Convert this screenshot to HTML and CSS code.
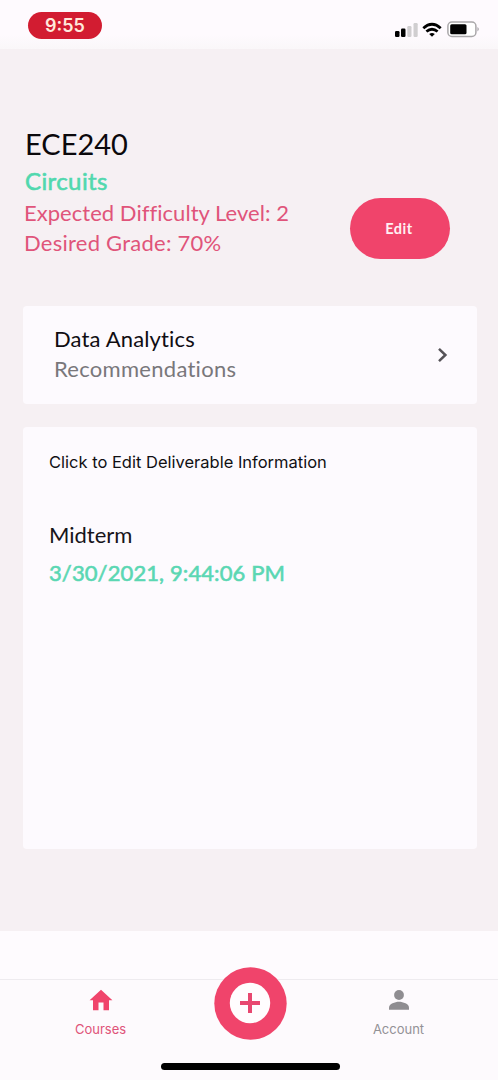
FILE: index.html
```html
<!DOCTYPE html>
<html lang="en">
<head>
<meta charset="utf-8">
<title>ECE240</title>
<link rel="stylesheet" href="styles.css">
</head>
<body>
<div class="phone">
  <header class="status">
    <span class="clock">9:55</span>
    <span class="indicators">
      <svg class="signal" width="24" height="16" viewBox="0 0 24 16"><rect x="0" y="9" width="4.5" height="6" rx="1.2"/><rect x="6" y="6.500" width="4.500" height="8.500" rx="1.2"/><rect class="dim" x="12.300" y="4" width="4.200" height="11" rx="1.2"/><rect class="dim" x="18.500" y="1" width="4.200" height="14" rx="1.2"/></svg>
      <svg class="wifi" width="20" height="16" viewBox="0 0 20 16"><path d="M1.300 6.200Q10-1.600 18.700 6.200"/><path d="M4.400 9.500Q10 4.900 15.600 9.500"/><path class="dot" d="M7.200 12Q10 9.900 12.800 12L10 14.800Z"/></svg>
      <svg class="battery" width="33" height="17" viewBox="0 0 33 17"><rect class="shell" x=".9" y="1" width="28" height="14.500" rx="4"/><rect x="3.200" y="3.200" width="16.300" height="10" rx="1.500"/><path class="cap" d="M30.500 6Q33 8.200 30.500 10.500Z"/></svg>
    </span>
  </header>
  <main class="screen">
    <section class="summary">
      <div class="details">
        <h1 class="code">ECE240</h1>
        <p class="name">Circuits</p>
        <p class="fact level">Expected Difficulty Level: 2</p>
        <p class="fact grade">Desired Grade: 70%</p>
      </div>
      <button class="edit">Edit</button>
    </section>
    <section class="card analytics">
      <div>
        <h2 class="analytics-title">Data Analytics</h2>
        <p class="analytics-sub">Recommendations</p>
      </div>
      <svg class="chevron" width="12" height="16" viewBox="0 0 12 16"><path d="M2 1.800L8.400 8L2 14.200"/></svg>
    </section>
    <section class="card deliverables">
      <p class="hint">Click to Edit Deliverable Information</p>
      <h2 class="item">Midterm</h2>
      <p class="due">3/30/2021, 9:44:06 PM</p>
    </section>
  </main>
  <div class="shelf"></div>
  <nav class="tabs">
    <a class="tab active">
      <svg width="24" height="22" viewBox="0 0 24 22"><path d="M12 .7L23.400 11.300H20V21.200H14.500V13.600H9.500V21.200H4V11.300H.6Z"/></svg>
      <span class="courses">Courses</span>
    </a>
    <a class="add">
      <svg width="73" height="73" viewBox="0 0 73 73"><circle class="ring" cx="36.500" cy="36.500" r="36.200"/><circle class="hole" cx="36" cy="36" r="20.200"/><path d="M36 26V46M26 36H46"/></svg>
    </a>
    <a class="tab">
      <svg width="24" height="22" viewBox="0 0 24 22"><circle cx="12" cy="6" r="4.900"/><path d="M2 20.800V18.500C2 15 8 12.800 12 12.800S22 15 22 18.500V20.800Z"/></svg>
      <span class="account">Account</span>
    </a>
  </nav>
  <div class="home-row"><div class="home-bar"></div></div>
</div>
</body>
</html>
```
FILE: styles.css
```css
* { box-sizing: border-box; }
body, h1, h2, p { margin: 0; font-weight: 400; }
body { font-family: Lato, sans-serif; font-variant-ligatures: none; background: #fdfafd; }
.phone { width: 498px; height: 1080px; display: flex; flex-direction: column; overflow: hidden; white-space: nowrap; }

.status { height: 49px; flex: none; display: flex; justify-content: space-between; align-items: flex-start; padding: 12px 17px 0 28px; background: linear-gradient(#fefafe 70%, #faf7f9); }
.clock { width: 74px; height: 27px; border-radius: 14px; background: #d21c31; color: #ffe9dc; font: 600 18px/28px Inter, sans-serif; text-align: center; }
.indicators { display: flex; align-items: center; height: 17px; margin-top: 9px; }
.signal { margin-right: 3px; }
.dim { fill: #d0ced0; }
.wifi { margin-right: 5px; fill: none; stroke: #000; stroke-width: 2.8; }
.wifi .dot { fill: #000; stroke: none; }
.battery { margin-right: 1px; }
.shell { fill: #fff; stroke: #a9a7a9; stroke-width: 1.5; }
.cap { fill: #99979a; }

.screen { height: 882px; flex: none; background: #f6f0f3; padding: 76px 21px 0 23px; }
.summary { display: flex; justify-content: space-between; height: 181px; padding: 0 27px 0 2px; }
.code { font-size: 29px; line-height: 36px; padding-top: 1px; margin-bottom: 4px; color: #0b080b; }
.name { font-size: 24px; line-height: 30px; color: #51d8ae; margin-bottom: 1px; letter-spacing: .4px; -webkit-text-stroke: .6px #51d8ae; }
.fact { font-size: 22px; line-height: 30px; color: #e0547a; margin-left: -1px; padding-top: 1px; margin-bottom: -1px; letter-spacing: .04px; }
.grade { letter-spacing: .25px; }
.edit { width: 100px; height: 61px; margin-top: 73px; padding: 0 2px 1px 0; border: 0; border-radius: 31px; background: #f0446b; color: #fff0f3; font: 700 14.5px Lato, sans-serif; letter-spacing: .5px; }

.card { background: #fdfafe; border-radius: 4px; }
.analytics { height: 98px; padding: 18px 28px 0 31px; display: flex; justify-content: space-between; }
.analytics-title { font-size: 22px; line-height: 30px; color: #100d12; letter-spacing: .15px; }
.analytics-sub { font-size: 22px; line-height: 30px; color: #79777b; letter-spacing: .28px; }
.chevron { margin-top: 23px; fill: none; stroke: #555257; stroke-width: 2.5; }
.deliverables { height: 422px; margin-top: 23px; padding: 23px 26px; }
.hint { font: 16.500px/24px Inter, sans-serif; color: #111013; margin-bottom: 46px; }
.item { font-size: 22px; line-height: 30px; color: #17141a; margin-bottom: 8px; }
.due { font-size: 22px; line-height: 30px; color: #5bd7b3; letter-spacing: .1px; -webkit-text-stroke: .6px #5bd7b3; }

.shelf { height: 48px; flex: none; background: #fefbfe; }
.tabs { height: 79px; flex: none; display: grid; grid-template-columns: 201px 98px 199px; border-top: 1px solid #eeebef; }
.tab { display: flex; flex-direction: column; align-items: center; padding-top: 9px; color: #939196; fill: #8f8d91; font: 13px/18px Inter, sans-serif; }
.tab span { margin-top: 9px; }
.active { color: #df5379; fill: #f0446b; }
.add { justify-self: center; margin-top: -13px; height: 73px; }
.add path { fill: none; stroke: #e84870; stroke-width: 4; }
.ring { fill: #f0446b; }
.hole { fill: #fffdfe; }
.home-row { display: flex; justify-content: center; padding: 5px 0 0 3px; }
.home-bar { width: 179px; height: 7px; border-radius: 4px; background: #000; }
```
